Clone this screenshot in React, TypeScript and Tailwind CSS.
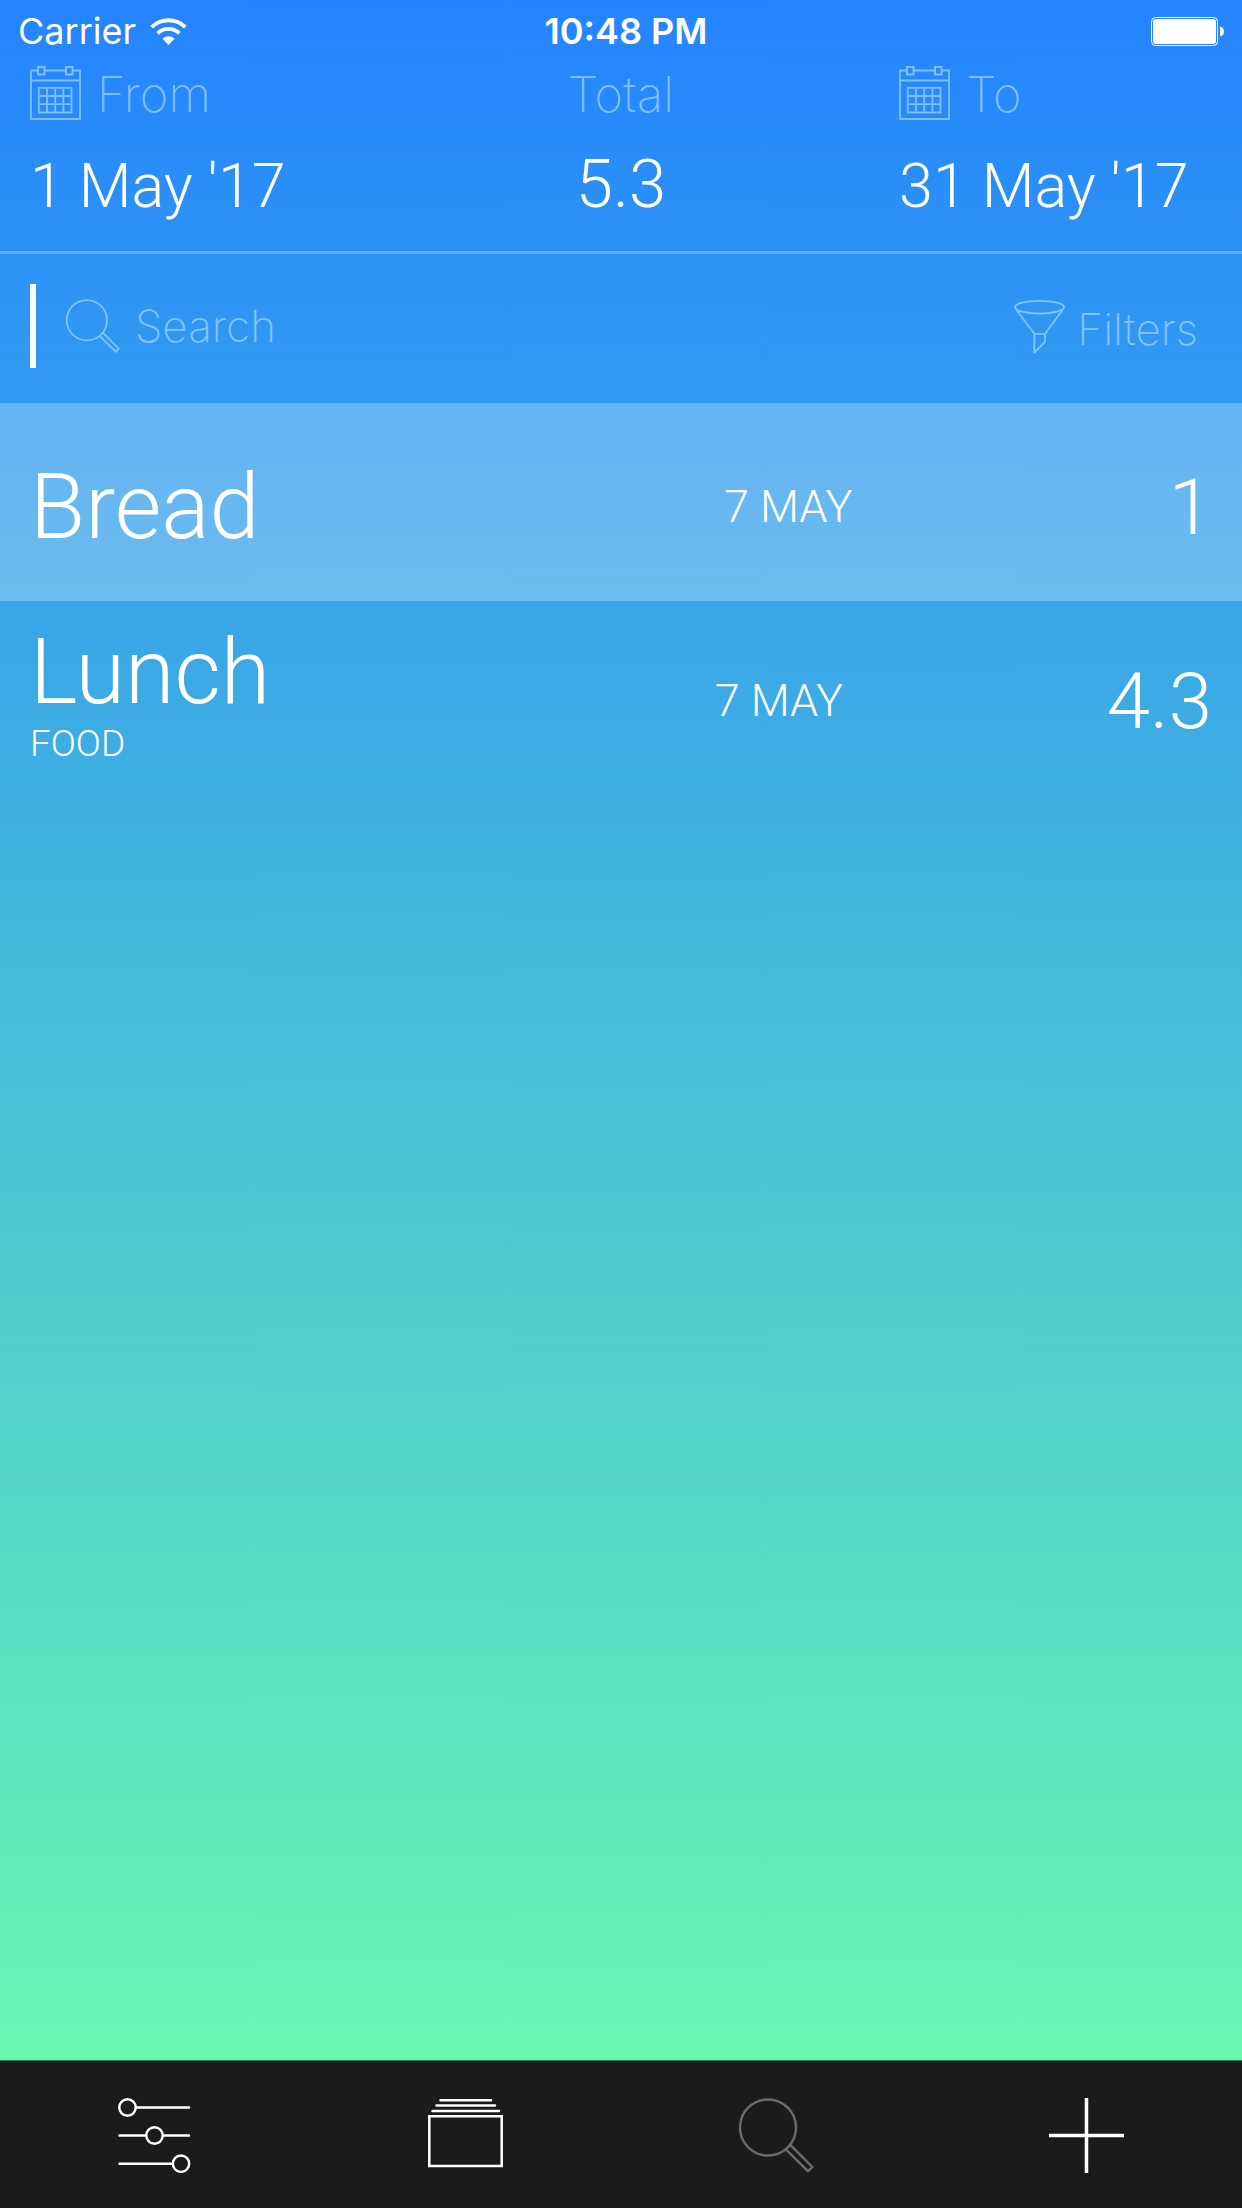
import type { ReactNode } from "react";

function CalendarIcon() {
  return (
    <svg width="51" height="54" viewBox="0 0 51 54" fill="none" stroke="currentColor" strokeWidth="1.8" className="shrink-0" aria-hidden="true">
      <path d="M7.5 4.5H1V53H50V4.5H43M14.500 4.500H35.500M1 14.500H50" />
      <path d="M8 1H14.500V8.500H8ZM36 1H42.500V8.500H36Z" strokeWidth="2" />
      <path d="M8.800 21.800H41.500V46.500H8.800ZM17 21.800V46.500M25.200 21.800V46.500M33.400 21.800V46.500M8.800 30H41.500M8.800 38.200H41.500" />
    </svg>
  );
}

function MagnifierIcon({ size, stroke }: { size: number; stroke: number }) {
  return (
    <svg width={size} height={size} viewBox="0 0 75 75" fill="none" stroke="currentColor" strokeWidth={stroke} className="shrink-0" aria-hidden="true">
      <circle cx="29" cy="29.500" r="28" />
      <path d="M47 51.500L69 73.200L73.300 69L51.500 47.200" />
    </svg>
  );
}

function FunnelIcon() {
  return (
    <svg width="51" height="54" viewBox="0 0 51 54" fill="none" stroke="currentColor" strokeWidth="1.800" strokeLinejoin="round" className="shrink-0" aria-hidden="true">
      <ellipse cx="25.500" cy="7.200" rx="24.500" ry="6.300" />
      <path d="M2.500 10L20.300 33.800H31L48.500 10M20.300 33.800V52.500L31 42V33.800" />
    </svg>
  );
}

function WifiIcon() {
  return (
    <svg width="37" height="27" viewBox="0 0 37 27" fill="none" stroke="currentColor" strokeWidth="3.800" aria-label="Wi-Fi">
      <path d="M1.600 9.200A24 24 0 0 1 35.400 9.200" />
      <path d="M7.600 15.400A15.500 15.500 0 0 1 29.400 15.400" />
      <path d="M18.500 27L12.500 20.700A8.600 8.600 0 0 1 24.500 20.700Z" fill="currentColor" stroke="none" />
    </svg>
  );
}

function BatteryIcon() {
  return (
    <svg width="73" height="29" viewBox="0 0 73 29" fill="none" aria-label="Battery full">
      <rect x="0.500" y="0.500" width="66" height="28" rx="4" stroke="currentColor" />
      <rect x="2" y="2" width="63" height="25" rx="3" fill="currentColor" />
      <path d="M69 9.500C74.300 10.500 74.300 18.500 69 19.500Z" fill="currentColor" />
    </svg>
  );
}

function SlidersIcon() {
  return (
    <svg width="75" height="75" viewBox="0 0 75 75" fill="none" stroke="currentColor" strokeWidth="2.400" strokeLinecap="round" aria-hidden="true">
      <circle cx="9.500" cy="9.500" r="8.200" />
      <path d="M18 9.500H71M1.500 37.500H27.500M45 37.500H71M1.500 65.700H54.500" />
      <circle cx="36.500" cy="37.500" r="8.200" />
      <circle cx="63" cy="65.700" r="8.200" />
    </svg>
  );
}

function StackIcon() {
  return (
    <svg width="75" height="75" viewBox="0 0 75 75" fill="none" stroke="currentColor" strokeWidth="2.500" strokeLinecap="round" aria-hidden="true">
      <path d="M12.500 2.200H63M8.500 7.500H67M4.500 12.900H71" />
      <path d="M1.300 18.300H73.700V68H1.300Z" strokeLinecap="butt" />
    </svg>
  );
}

function PlusIcon() {
  return (
    <svg width="75" height="75" viewBox="0 0 75 75" fill="none" stroke="currentColor" strokeWidth="3.500" aria-hidden="true">
      <path d="M0 37.500H75M37.500 0V75" />
    </svg>
  );
}

function DateField({ label, value }: { label: string; value: string }) {
  return (
    <button type="button" className="flex flex-col items-start gap-8 text-left">
      <span className="flex items-start gap-4 font-['Inter',sans-serif] text-[49px] leading-[58px] font-extralight text-[#7dbfff]">
        <CalendarIcon />
        {label}
      </span>
      <span className="text-[61px] leading-[60px] whitespace-nowrap">{value}</span>
    </button>
  );
}

type Expense = { name: string; category?: string; date: string; amount: string; selected?: boolean };

const expenses: Expense[] = [
  { name: "Bread", date: "7 MAY", amount: "1", selected: true },
  { name: "Lunch", category: "FOOD", date: "7 MAY", amount: "4.3" },
];

function ExpenseRow({ name, category, date, amount, selected }: Expense) {
  return (
    <li className={selected ? "flex h-[198px] items-center bg-white/25 px-[30px] pt-2" : "flex h-[198px] items-center px-[30px]"}>
      <div className="shrink-0 grow-3 basis-[54%] pt-1">
        <h2 className="text-[90px] leading-[90px]">{name}</h2>
        {category && <p className="mt-2 pb-3.5 text-[37px] leading-[36px]">{category}</p>}
      </div>
      <span className="text-[45px] leading-[45px] whitespace-nowrap">{date}</span>
      <span className="grow-17 pt-1 text-right text-[78px] leading-[78px]">{amount}</span>
    </li>
  );
}

function TabButton({ label, active, children }: { label: string; active?: boolean; children: ReactNode }) {
  return (
    <button type="button" aria-label={label} aria-current={active ? "page" : undefined} className={active ? "flex flex-1 justify-center text-[#6b6b6b]" : "flex flex-1 justify-center text-white"}>
      {children}
    </button>
  );
}

export default function App() {
  return (
    <div className="flex min-h-screen flex-col bg-[#1b1b1b] font-['Roboto','Liberation_Sans',sans-serif] font-light text-white">
      <div className="flex flex-1 flex-col bg-linear-to-b/srgb from-[#2484ff] to-[#6af6b2]">
        <div className="grid h-[62px] grid-cols-3 items-center px-[18px] font-['Inter',sans-serif] text-[36px] leading-[36px]">
          <span className="flex items-center gap-3.5 font-normal">
            Carrier
            <WifiIcon />
          </span>
          <span className="pl-2.5 text-center font-semibold">10:48 PM</span>
          <span className="flex justify-end">
            <BatteryIcon />
          </span>
        </div>

        <header className="grid grid-cols-[9fr_16fr_9fr] border-b-3 border-[#5fadf9] px-[30px] pt-1 pb-[35px]">
          <DateField label="From" value="1 May '17" />
          <div className="flex flex-col items-center gap-[30px]">
            <span className="font-['Inter',sans-serif] text-[49px] leading-[58px] font-extralight text-[#7dbfff]">Total</span>
            <span className="text-[67px] leading-[60px]">5.3</span>
          </div>
          <DateField label="To" value="31 May '17" />
        </header>

        <div className="flex items-center pt-[30px] pr-[44px] pb-[35px] pl-[30px] font-['Inter',sans-serif] text-[44px] font-extralight text-[#83c5ff]">
          <div className="h-[84px] w-1.5 bg-white" />
          <label className="ml-[30px] flex flex-1 items-center gap-[15px]">
            <MagnifierIcon size={54} stroke={2.4} />
            <input type="text" placeholder="Search" aria-label="Search" className="w-full flex-1 leading-[54px] outline-none placeholder:text-[#83c5ff] placeholder:opacity-100" />
          </label>
          <button type="button" className="flex items-start gap-3 pt-1.5 leading-[58px]">
            <FunnelIcon />
            Filters
          </button>
        </div>

        <ul>
          {expenses.map((e) => (
            <ExpenseRow key={e.name} {...e} />
          ))}
        </ul>
      </div>

      <nav className="flex border-t border-[#2f7a58] pt-[37px] pb-[35px]">
        <TabButton label="Settings"><SlidersIcon /></TabButton>
        <TabButton label="Categories"><StackIcon /></TabButton>
        <TabButton label="Search expenses" active><MagnifierIcon size={75} stroke={2.4} /></TabButton>
        <TabButton label="Add expense"><PlusIcon /></TabButton>
      </nav>
    </div>
  );
}
